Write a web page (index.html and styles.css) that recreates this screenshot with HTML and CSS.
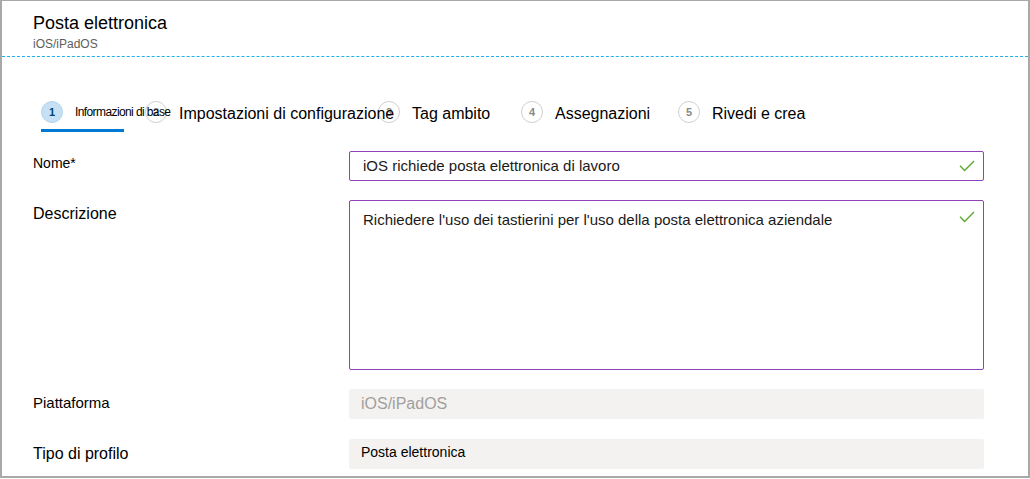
FILE: index.html
```html
<!DOCTYPE html>
<html lang="it">
<head>
    <meta charset="UTF-8">
    <meta name="viewport" content="width=device-width, initial-scale=1.0">
    <title>Posta elettronica</title>
    <link rel="stylesheet" href="styles.css">
</head>
<body>
    <div class="frame">
        <div class="header">
            <div class="title">Posta elettronica</div>
            <div class="subtitle">iOS/iPadOS</div>
        </div>

        <div class="steps">
            <div class="step step-1 active">
                <div class="step-head">
                    <span class="circle">1</span>
                    <span class="step-label small">Informazioni di base</span>
                </div>
                <div class="step-bar"></div>
            </div>
            <div class="step step-2">
                <div class="step-head">
                    <span class="circle">2</span>
                    <span class="step-label">Impostazioni di configurazione</span>
                </div>
            </div>
            <div class="step step-3">
                <div class="step-head">
                    <span class="circle">3</span>
                    <span class="step-label">Tag ambito</span>
                </div>
            </div>
            <div class="step step-4">
                <div class="step-head">
                    <span class="circle">4</span>
                    <span class="step-label">Assegnazioni</span>
                </div>
            </div>
            <div class="step step-5">
                <div class="step-head">
                    <span class="circle">5</span>
                    <span class="step-label">Rivedi e crea</span>
                </div>
            </div>
        </div>

        <div class="form">
            <div class="label label-nome">Nome*</div>
            <div class="field input">
                <span>iOS richiede posta elettronica di lavoro</span>
                <svg class="check" width="16" height="12" viewBox="0 0 16 12"><path d="M1 5.8 L5.6 10.4 L15 1" fill="none" stroke="#5ca82c" stroke-width="1.4"/></svg>
            </div>

            <div class="label label-desc">Descrizione</div>
            <div class="field textarea">
                <span>Richiedere l'uso dei tastierini per l'uso della posta elettronica aziendale</span>
                <svg class="check" width="16" height="12" viewBox="0 0 16 12"><path d="M1 5.8 L5.6 10.4 L15 1" fill="none" stroke="#5ca82c" stroke-width="1.4"/></svg>
            </div>

            <div class="label label-plat">Piattaforma</div>
            <div class="field readonly muted">iOS/iPadOS</div>

            <div class="label label-tipo">Tipo di profilo</div>
            <div class="field readonly small-text">Posta elettronica</div>
        </div>
    </div>
</body>
</html>
```

FILE: styles.css
```css
html, body {
    margin: 0;
    padding: 0;
    background-color: #fff;
    overflow: hidden;
}

body {
    font-family: "Liberation Sans", Arial, sans-serif;
    color: #1b1a19;
}

.frame {
    box-sizing: border-box;
    width: 1030px;
    height: 478px;
    border-top: 1px solid #a8a8a8;
    border-left: 2px solid #a8a8a8;
    border-right: 2px solid #a8a8a8;
    border-bottom: 2px solid #a8a8a8;
}

/* header */
.header {
    padding: 11px 0 4px 31px;
    border-bottom: 1px dashed #1fb2ea;
}

.title {
    font-size: 18px;
    line-height: 22px;
    color: #000;
}

.subtitle {
    margin-top: 2px;
    font-size: 12px;
    line-height: 16px;
    color: #605e5c;
}

/* wizard steps */
.steps {
    display: flex;
    padding-left: 39px;
    margin-top: 44px;
    height: 31px;
}

.step {
    flex: none;
}

.step-1 { width: 104px; }
.step-2 { width: 233px; }
.step-3 { width: 143px; }
.step-4 { width: 157px; }

.step-head {
    display: flex;
    align-items: center;
    height: 22px;
    white-space: nowrap;
}

.circle {
    box-sizing: border-box;
    flex: none;
    width: 22px;
    height: 22px;
    border-radius: 50%;
    border: 1px solid #d2d0ce;
    background-color: #fff;
    color: #8a8886;
    font-size: 11px;
    font-weight: bold;
    display: flex;
    align-items: center;
    justify-content: center;
}

.active .circle {
    background-color: #c7e0f4;
    border-color: #b3d4ef;
    color: #004578;
}

.step-label {
    position: relative;
    z-index: 1;
    margin-left: 12px;
    padding-top: 4px;
    font-size: 16px;
    color: #000;
}

.step-label.small {
    padding-top: 0;
    font-size: 12px;
    letter-spacing: -0.6px;
}

.step-bar {
    width: 83px;
    height: 3px;
    margin-top: 6px;
    background-color: #0078d4;
}

/* form */
.form {
    display: grid;
    grid-template-columns: 316px 635px;
    padding-left: 31px;
    margin-top: 19px;
    row-gap: 19px;
}

.label {
    color: #000;
}

.label-nome {
    font-size: 14px;
    line-height: 18px;
    padding-top: 3px;
}

.label-desc {
    font-size: 16px;
    line-height: 20px;
    padding-top: 4px;
}

.label-plat {
    font-size: 15px;
    line-height: 18px;
    padding-top: 5px;
}

.label-tipo {
    font-size: 16px;
    line-height: 20px;
    padding-top: 5px;
    margin-top: 1px;
}

.field {
    box-sizing: border-box;
    display: flex;
    justify-content: space-between;
    border-radius: 2px;
    padding: 0 8px 0 13px;
    font-size: 15px;
    line-height: 18px;
    color: #1b1a19;
}

.input {
    height: 30px;
    align-items: center;
    border: 1px solid #8c44b8;
}

.textarea {
    height: 170px;
    align-items: flex-start;
    padding-top: 10px;
    border: 1px solid #8c44b8;
}

.readonly {
    height: 30px;
    align-items: center;
    padding-left: 12px;
    background-color: #f3f2f1;
}

.muted {
    font-size: 16px;
    line-height: 20px;
    color: #a19f9d;
}

.small-text {
    font-size: 14px;
    padding-bottom: 4px;
    margin-top: 1px;
    color: #000;
}
```
